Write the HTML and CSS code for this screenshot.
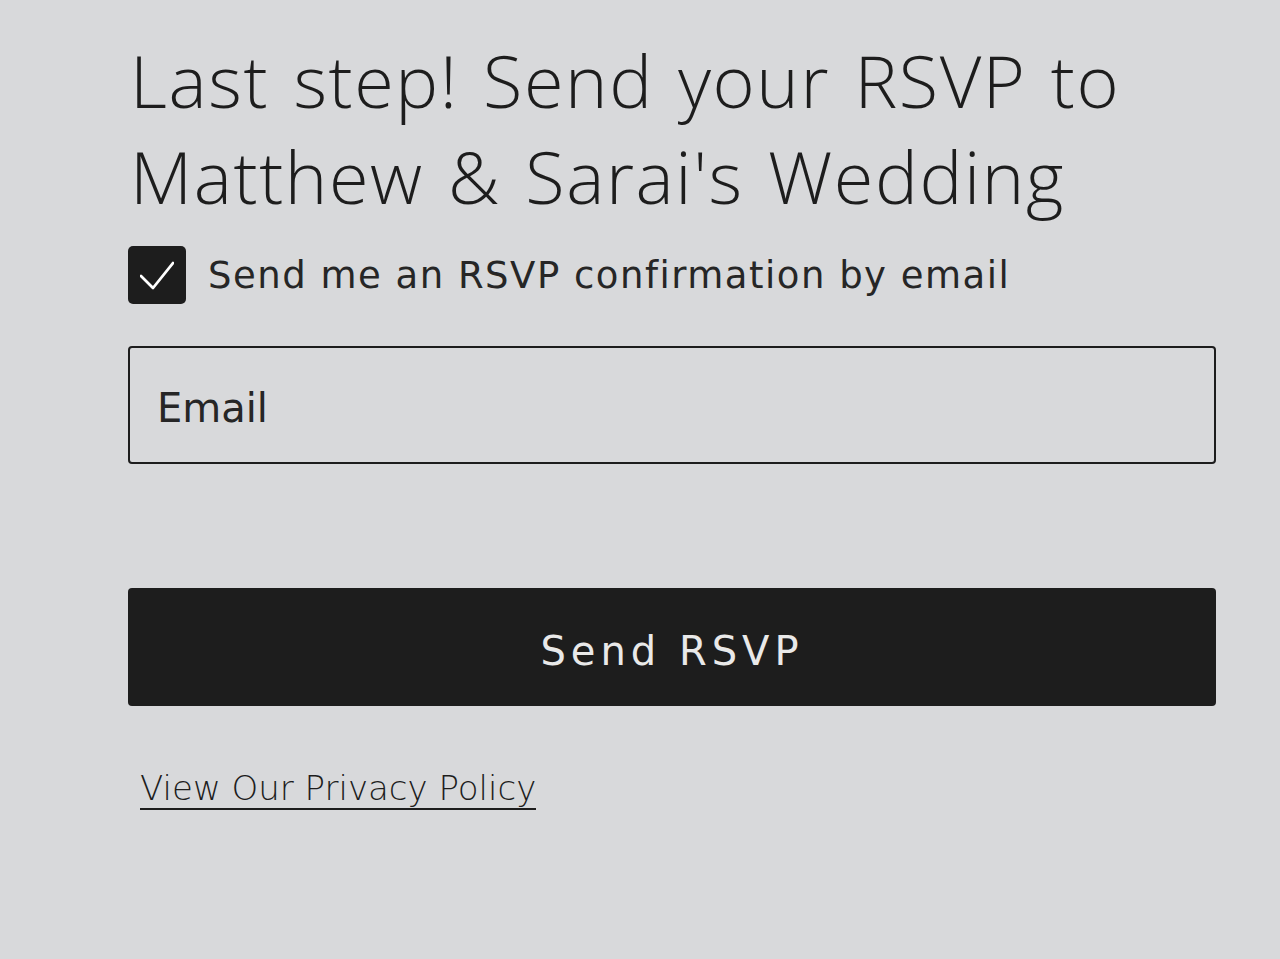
FILE: index.html
```html
<!DOCTYPE html>
<html>
<head>
  <meta charset="UTF-8">
  <title>RSVP</title>
  <link rel="stylesheet" href="styles.css">
</head>
<body>

<div class="rsvp">
  <h1 class="rsvpTitle">Last step! Send your RSVP to Matthew &amp; Sarai's Wedding</h1>

  <label class="confirmRow">
    <span class="checkBox">
      <svg width="34" height="34" viewBox="0 0 34 34">
        <path d="M1 18 L13 30 L33 5" fill="none" stroke="#fff" stroke-width="2.8" stroke-linecap="round" stroke-linejoin="round"/>
      </svg>
    </span>
    <span class="confirmText">Send me an RSVP confirmation by email</span>
  </label>

  <input type="text" class="emailField" placeholder="Email" />

  <button class="sendBtn">Send RSVP</button>

  <a class="privacyLink" href="#">View Our Privacy Policy</a>
</div>

</body>
</html>
```

FILE: styles.css
```css
body, html {
  margin: 0;
  padding: 0;
  background: #d8d9db;
  color: #1d1d1d;
  font-family: "DejaVu Sans", sans-serif;
}
.rsvp {
  width: 1088px;
  margin-left: 128px;
  padding-top: 32px;
  display: flex;
  flex-direction: column;
  align-items: flex-start;
}
.rsvpTitle {
  margin: 0 0 0 2px;
  font-family: "Open Sans", sans-serif;
  font-weight: 350;
  font-size: 72px;
  line-height: 96px;
  letter-spacing: 1.6px;
  word-spacing: 4px;
}
.confirmRow {
  display: flex;
  align-items: center;
  gap: 22px;
  margin-top: 22px;
}
.checkBox {
  width: 58px;
  height: 58px;
  border-radius: 5px;
  background: #1d1d1d;
  display: flex;
  align-items: center;
  justify-content: center;
}
.confirmText {
  font-size: 37px;
  letter-spacing: 1.5px;
  color: #262626;
}
.emailField {
  box-sizing: border-box;
  width: 100%;
  height: 118px;
  margin-top: 42px;
  padding: 6px 27px 0;
  border: 2px solid #1d1d1d;
  border-radius: 4px;
  background: transparent;
  font-family: inherit;
  font-size: 40px;
  color: #262626;
}
.emailField::placeholder {
  color: #262626;
  opacity: 1;
}
.sendBtn {
  width: 100%;
  height: 118px;
  margin-top: 124px;
  padding-top: 8px;
  border: none;
  border-radius: 4px;
  background: #1d1d1d;
  color: #e9e9e9;
  font-family: inherit;
  font-size: 40px;
  font-weight: 500;
  letter-spacing: 5px;
}
.privacyLink {
  margin: 62px 0 0 12px;
  color: #1d1d1d;
  font-size: 34px;
  font-weight: 300;
  text-decoration: none;
  border-bottom: 2px solid #1d1d1d;
  line-height: 40px;
}
```
